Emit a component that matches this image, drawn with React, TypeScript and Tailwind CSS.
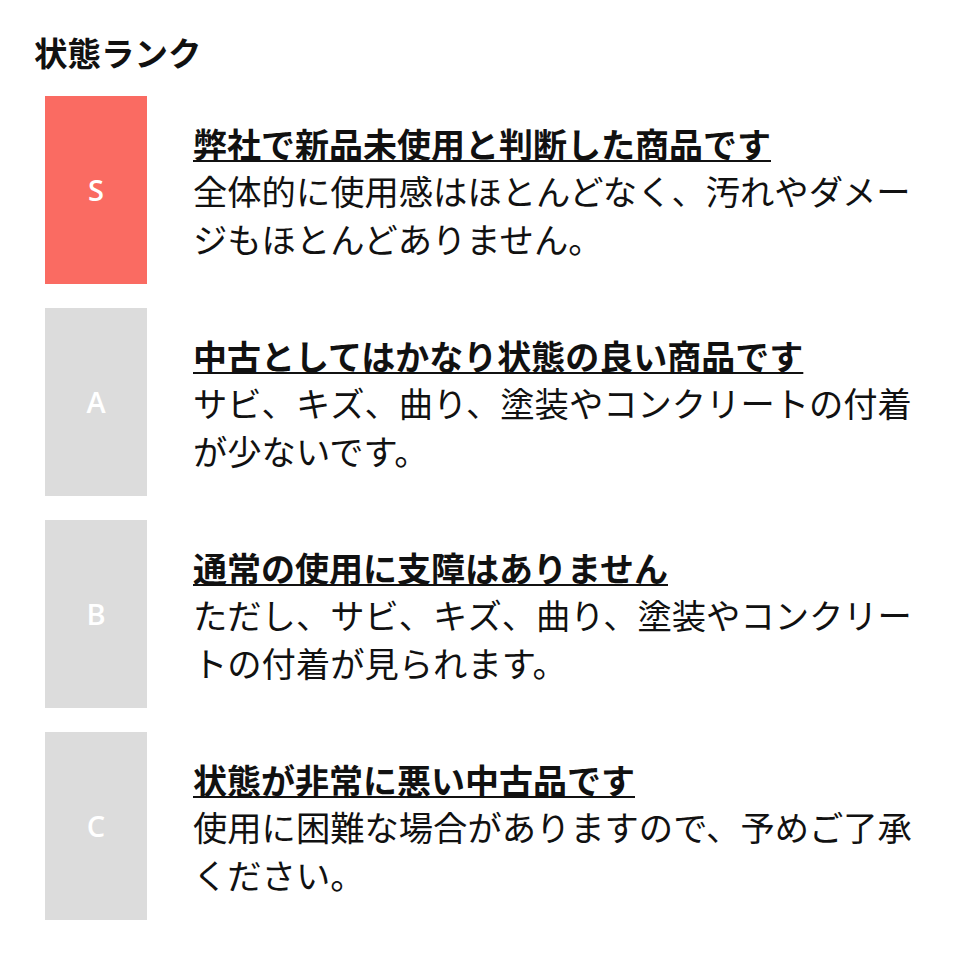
import React from "react";

const items = [
  {
    rank: "S",
    bg: "bg-[#fa6b62]",
    title: "弊社で新品未使用と判断した商品です",
    body: ["全体的に使用感はほとんどなく、汚れやダメー", "ジもほとんどありません。"],
  },
  {
    rank: "A",
    bg: "bg-[#dcdcdc]",
    title: "中古としてはかなり状態の良い商品です",
    body: ["サビ、キズ、曲り、塗装やコンクリートの付着", "が少ないです。"],
  },
  {
    rank: "B",
    bg: "bg-[#dcdcdc]",
    title: "通常の使用に支障はありません",
    body: ["ただし、サビ、キズ、曲り、塗装やコンクリー", "トの付着が見られます。"],
  },
  {
    rank: "C",
    bg: "bg-[#dcdcdc]",
    title: "状態が非常に悪い中古品です",
    body: ["使用に困難な場合がありますので、予めご了承", "ください。"],
  },
];

export default function App() {
  return (
    <div
      className="w-[960px] h-[960px] bg-white text-[#111] overflow-hidden"
      style={{ fontFamily: '"Noto Sans CJK JP", "Noto Sans", sans-serif' }}
    >
      <h1 className="pl-[34px] pt-[31px] text-[33.5px] leading-[42px] font-bold">状態ランク</h1>
      <div className="flex flex-col gap-[24px] pl-[45px] pt-[23px]">
        {items.map((it) => (
          <div key={it.rank} className="flex items-center gap-[46px]">
            <div
              className={`w-[102px] h-[188px] shrink-0 flex items-center justify-center ${it.bg}`}
            >
              <span
                className="text-white text-[29px] font-semibold"
                style={{ fontFamily: '"Open Sans", sans-serif' }}
              >
                {it.rank}
              </span>
            </div>
            <div className="w-[740px] text-[34.3px] leading-[47.5px] pt-[2px] whitespace-nowrap">
              <div className="text-[34px] font-bold underline decoration-[2px] underline-offset-[2px]">
                {it.title}
              </div>
              {it.body.map((line) => (
                <div key={line}>{line}</div>
              ))}
            </div>
          </div>
        ))}
      </div>
    </div>
  );
}
